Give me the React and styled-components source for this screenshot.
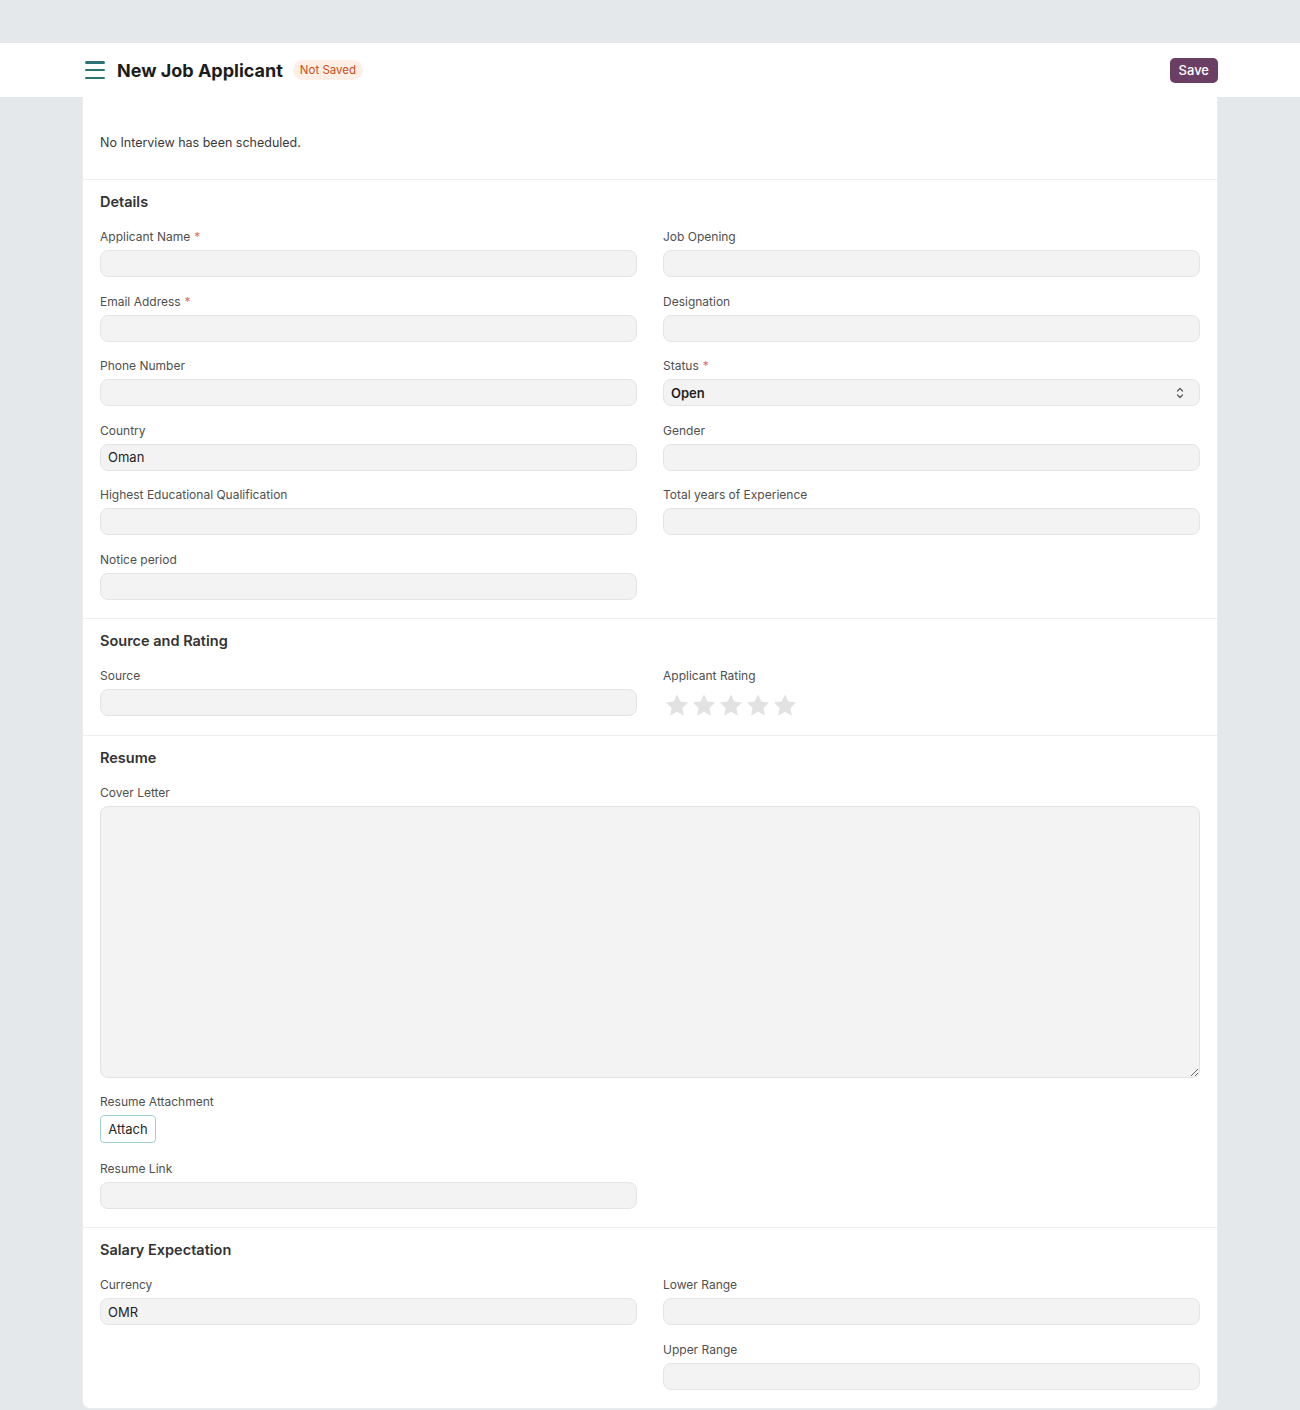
import React from 'react'
import styled, { createGlobalStyle } from 'styled-components'

const GlobalStyle = createGlobalStyle`
  * { box-sizing: border-box; }
  body {
    margin: 0;
    background: #e5e8eb;
    font-family: Inter, "Noto Sans", sans-serif;
    color: #1f272e;
    -webkit-font-smoothing: antialiased;
  }
`

const Page = styled.div`
  padding-top: 43px;
  min-height: 1410px;
`

const Header = styled.header`
  height: 54px;
  background: #ffffff;
`

const HeaderInner = styled.div`
  width: 1136px;
  height: 100%;
  margin: 0 auto;
  display: flex;
  align-items: center;
  justify-content: space-between;
`

const TitleGroup = styled.div`
  display: flex;
  align-items: center;
`

const Hamburger = styled.button`
  width: 22px;
  height: 22px;
  margin-left: 2px;
  margin-right: 11px;
  border: none;
  background: none;
  display: flex;
  flex-direction: column;
  justify-content: space-between;
  padding: 2px 1px;

  span {
    display: block;
    height: 2.5px;
    border-radius: 2px;
    background: #2d7372;
  }
`

const Title = styled.h1`
  margin: 0 10px 0 0;
  font-size: 18px;
  font-weight: 700;
  color: #1c1c1c;
`

const Badge = styled.span`
  font-size: 11.5px;
  line-height: 18px;
  padding: 1px 7px;
  border-radius: 10px;
  background: #fdefe6;
  color: #cb4e1b;
`

const SaveButton = styled.button`
  height: 25px;
  padding: 0 9px;
  border: none;
  border-radius: 5px;
  background: #6b3e64;
  color: #ffffff;
  font-family: inherit;
  font-size: 13px;
  font-weight: 500;
`

const Card = styled.main`
  width: 1136px;
  margin: 0 auto;
  background: #ffffff;
  border: 1px solid #ececec;
  border-top: none;
  border-radius: 0 0 8px 8px;
`

const Intro = styled.div`
  padding: 37px 17px 27px;
  font-size: 12.5px;
  line-height: 18px;
  color: #3b3b3b;
  border-bottom: 1px solid #eeeeee;
`

const Section = styled.section`
  padding: 12px 17px 2px;
  border-bottom: ${p => (p.last ? 'none' : '1px solid #eeeeee')};
`

const SectionTitle = styled.h2`
  margin: 0 0 17px;
  font-size: 14.5px;
  line-height: 20px;
  font-weight: 600;
  color: #333333;
`

const Grid = styled.div`
  display: grid;
  grid-template-columns: 1fr 1fr;
  column-gap: 26px;
`

const Column = styled.div`
  display: flex;
  flex-direction: column;
`

const Field = styled.div`
  margin-bottom: ${p => p.mb || '16.5px'};
`

const Label = styled.div`
  font-size: 12px;
  line-height: 16px;
  color: #4f4f4f;
  margin-bottom: 5px;

  em {
    font-style: normal;
    color: #e96a6a;
    margin-left: 4px;
  }
`

const Input = styled.div`
  height: 27px;
  border-radius: 8px;
  background: #f3f3f3;
  border: 1px solid #e4e4e4;
  padding: 0 14px 0 7px;
  display: flex;
  align-items: center;
  justify-content: space-between;
  font-size: 13px;
  color: #1f1f1f;
  font-weight: ${p => (p.bold ? 600 : 400)};
`

const HalfWidth = styled.div`
  width: calc(50% - 13px);
`

const TextArea = styled.textarea`
  display: block;
  width: 100%;
  height: 272px;
  border-radius: 8px;
  background: #f3f3f3;
  border: 1px solid #e2e2e2;
  resize: vertical;
  font-family: inherit;
  font-size: 13px;
  outline: none;
`

const AttachButton = styled.button`
  display: block;
  height: 28px;
  width: 56px;
  margin-top: 1px;
  border: 1px solid #9fd1d3;
  border-radius: 4px;
  background: #ffffff;
  font-family: inherit;
  font-size: 13px;
  color: #262626;
  padding: 0;
`

const Stars = styled.div`
  display: flex;
  gap: 5px;
  padding: 5px 0 0 3px;
`

const Chevrons = () => (
  <svg width="10" height="14" viewBox="0 0 10 14" fill="none" stroke="#555" strokeWidth="1.2" strokeLinecap="round" strokeLinejoin="round">
    <path d="M2.5 5 L5 2.5 L7.5 5" />
    <path d="M2.5 9 L5 11.5 L7.5 9" />
  </svg>
)

const Star = () => (
  <svg width="22" height="22" viewBox="0 0 24 24">
    <path
      fill="#e2e2e2"
      d="M12 .6l3.67 7.57 8.33 1.15-6.06 5.83 1.48 8.28L12 19.45l-7.42 3.97 1.48-8.28L0 9.31l8.33-1.15z"
    />
  </svg>
)

const TextField = ({ label, required, value, bold, children }) => (
  <Field>
    <Label>
      {label}
      {required && <em>*</em>}
    </Label>
    <Input bold={bold}>
      {value}
      {children}
    </Input>
  </Field>
)

export default function App() {
  return (
    <>
      <GlobalStyle />
      <Page>
        <Header>
          <HeaderInner>
            <TitleGroup>
              <Hamburger aria-label="menu">
                <span />
                <span />
                <span />
              </Hamburger>
              <Title>New Job Applicant</Title>
              <Badge>Not Saved</Badge>
            </TitleGroup>
            <SaveButton>Save</SaveButton>
          </HeaderInner>
        </Header>

        <Card>
          <Intro>No Interview has been scheduled.</Intro>

          <Section>
            <SectionTitle>Details</SectionTitle>
            <Grid>
              <Column>
                <TextField label="Applicant Name" required />
                <TextField label="Email Address" required />
                <TextField label="Phone Number" />
                <TextField label="Country" value="Oman" />
                <TextField label="Highest Educational Qualification" />
                <TextField label="Notice period" />
              </Column>
              <Column>
                <TextField label="Job Opening" />
                <TextField label="Designation" />
                <TextField label="Status" required value="Open" bold>
                  <Chevrons />
                </TextField>
                <TextField label="Gender" />
                <TextField label="Total years of Experience" />
              </Column>
            </Grid>
          </Section>

          <Section>
            <SectionTitle>Source and Rating</SectionTitle>
            <Grid>
              <Column>
                <TextField label="Source" />
              </Column>
              <Column>
                <Field>
                  <Label>Applicant Rating</Label>
                  <Stars>
                    {[0, 1, 2, 3, 4].map(i => (
                      <Star key={i} />
                    ))}
                  </Stars>
                </Field>
              </Column>
            </Grid>
          </Section>

          <Section>
            <SectionTitle>Resume</SectionTitle>
            <Field>
              <Label>Cover Letter</Label>
              <TextArea />
            </Field>
            <Field mb="17.5px">
              <Label>Resume Attachment</Label>
              <AttachButton>Attach</AttachButton>
            </Field>
            <HalfWidth>
              <TextField label="Resume Link" />
            </HalfWidth>
          </Section>

          <Section last>
            <SectionTitle>Salary Expectation</SectionTitle>
            <Grid>
              <Column>
                <TextField label="Currency" value="OMR" />
              </Column>
              <Column>
                <TextField label="Lower Range" />
                <TextField label="Upper Range" />
              </Column>
            </Grid>
          </Section>
        </Card>
      </Page>
    </>
  )
}
